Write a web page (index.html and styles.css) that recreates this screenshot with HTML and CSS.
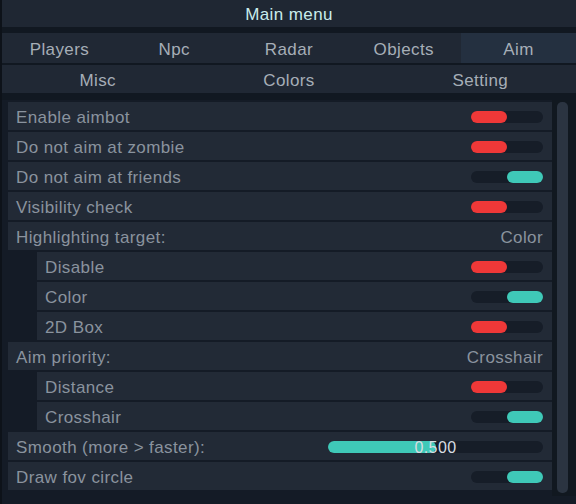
FILE: index.html
```html
<!DOCTYPE html>
<html>
<head>
<meta charset="utf-8">
<link rel="stylesheet" href="styles.css">
</head>
<body>
<div class="window">
  <div class="title">Main menu</div>
  <div class="tabs tabs5">
    <div class="tab">Players</div>
    <div class="tab">Npc</div>
    <div class="tab">Radar</div>
    <div class="tab">Objects</div>
    <div class="tab active">Aim</div>
  </div>
  <div class="tabs tabs3">
    <div class="tab">Misc</div>
    <div class="tab">Colors</div>
    <div class="tab">Setting</div>
  </div>
  <div class="content">
    <div class="list">
      <div class="row"><span class="label">Enable aimbot</span><span class="toggle"><span class="fill off"></span></span></div>
      <div class="row"><span class="label">Do not aim at zombie</span><span class="toggle"><span class="fill off"></span></span></div>
      <div class="row"><span class="label">Do not aim at friends</span><span class="toggle"><span class="fill on"></span></span></div>
      <div class="row"><span class="label">Visibility check</span><span class="toggle"><span class="fill off"></span></span></div>
      <div class="row"><span class="label">Highlighting target:</span><span class="label">Color</span></div>
      <div class="row sub"><span class="label">Disable</span><span class="toggle"><span class="fill off"></span></span></div>
      <div class="row sub"><span class="label">Color</span><span class="toggle"><span class="fill on"></span></span></div>
      <div class="row sub"><span class="label">2D Box</span><span class="toggle"><span class="fill off"></span></span></div>
      <div class="row"><span class="label">Aim priority:</span><span class="label">Crosshair</span></div>
      <div class="row sub"><span class="label">Distance</span><span class="toggle"><span class="fill off"></span></span></div>
      <div class="row sub"><span class="label">Crosshair</span><span class="toggle"><span class="fill on"></span></span></div>
      <div class="row"><span class="label">Smooth (more &gt; faster):</span><span class="slider"><span class="sfill" style="width:50%"></span><span class="sval">0.500</span></span></div>
      <div class="row"><span class="label">Draw fov circle</span><span class="toggle"><span class="fill on"></span></span></div>
    </div>
    <div class="scroll"><div class="thumb"></div></div>
  </div>
</div>
</body>
</html>
```
FILE: styles.css
```css
html, body {
  margin: 0;
  padding: 0;
  width: 576px;
  height: 504px;
  overflow: hidden;
  background: #0f151d;
}
.window {
  width: 576px;
  height: 504px;
  display: flex;
  flex-direction: column;
  font-family: "Liberation Sans", Arial, sans-serif;
  font-size: 17px;
  letter-spacing: 0.4px;
  background: #111821;
  border-left: 2px solid #0d1219;
  box-sizing: border-box;
}
.title {
  height: 27px;
  flex: none;
  box-sizing: border-box;
  padding-top: 3px;
  background: #1f2733;
  color: #c9ecec;
  display: flex;
  align-items: center;
  justify-content: center;
  margin-bottom: 6px;
}
.tabs {
  display: grid;
  flex: none;
  background: #202834;
  color: #a6aeb7;
}
.tabs5 {
  grid-template-columns: repeat(5, 1fr);
  height: 30px;
  margin-bottom: 2px;
}
.tabs3 {
  grid-template-columns: repeat(3, 1fr);
  height: 28px;
  margin-bottom: 7px;
}
.tab {
  display: flex;
  align-items: center;
  justify-content: center;
  padding-top: 3px;
}
.tab.active {
  background: #243040;
}
.content {
  flex: 1;
  display: flex;
  background: #141b26;
  min-height: 0;
}
.list {
  width: 544px;
  margin-left: 6px;
  padding-top: 2px;
  display: flex;
  flex-direction: column;
  gap: 2px;
}
.row {
  height: 28px;
  flex: none;
  background: #222a36;
  display: flex;
  align-items: center;
  justify-content: space-between;
  padding: 0 9px 0 8px;
  color: #8a939e;
  position: relative;
}
.row.sub {
  margin-left: 29px;
}
.label {
  padding-top: 4px;
}
.toggle {
  width: 72px;
  height: 12px;
  border-radius: 6px;
  background: #161d28;
  position: relative;
  display: flex;
  margin-top: 1px;
}
.fill {
  width: 36px;
  height: 12px;
  border-radius: 6px;
}
.fill.off {
  background: #ef3838;
}
.fill.on {
  background: #3fc9b8;
  margin-left: 36px;
}
.slider {
  width: 215px;
  height: 12px;
  border-radius: 6px;
  background: #161d28;
  position: relative;
  display: flex;
  margin-top: 1px;
}
.sfill {
  height: 12px;
  border-radius: 6px;
  background: #3fc9b8;
}
.sval {
  position: absolute;
  left: 0;
  right: 0;
  top: -2px;
  text-align: center;
  color: #d8dde2;
  font-size: 16px;
  line-height: 18px;
}
.scroll {
  flex: 1;
  background: #111820;
  padding: 2px 0 3px 5px;
  display: flex;
  box-sizing: border-box;
  height: 396px;
}
.thumb {
  width: 11px;
  height: 391px;
  border-radius: 5px;
  background: #2b3441;
}
```
